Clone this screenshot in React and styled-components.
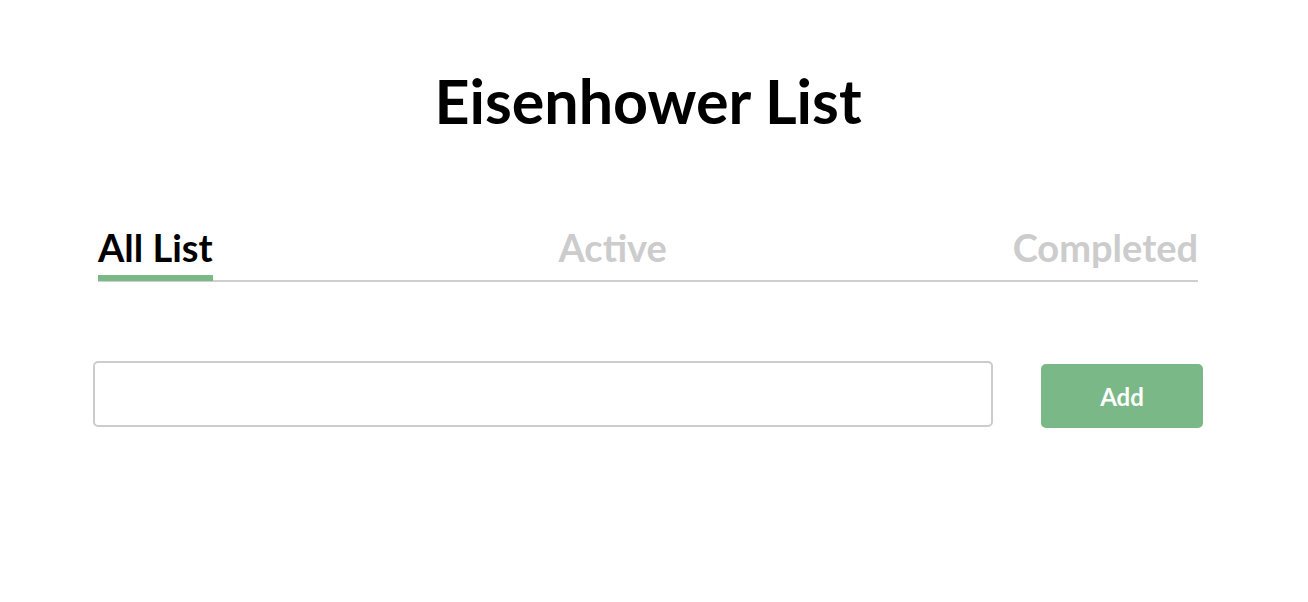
import React, { useState } from "react";
import styled, { createGlobalStyle } from "styled-components";

const GlobalStyle = createGlobalStyle`
  body {
    margin: 0;
    background: #fff;
    font-family: "Lato", "Inter", sans-serif;
  }
`;

const Page = styled.div`
  padding: 65px 105px 0 93px;
`;

const Title = styled.h1`
  margin: 0;
  text-align: center;
  font-size: 61px;
  font-weight: 700;
  color: #000;
  line-height: 72px;
`;

const Tabs = styled.div`
  display: flex;
  justify-content: space-between;
  margin: 88px 5px 0;
  border-bottom: 2px solid #cfcfcf;
`;

const Tab = styled.button`
  background: none;
  border: none;
  padding: 0 0 6px;
  font-family: inherit;
  font-size: 38px;
  font-weight: 700;
  line-height: 44px;
  color: ${(p) => (p.$active ? "#000" : "#cccccc")};
  border-bottom: 6px solid ${(p) => (p.$active ? "#7bb887" : "transparent")};
  margin-bottom: -1px;
  cursor: pointer;
`;

const Form = styled.form`
  display: flex;
  align-items: center;
  gap: 48px;
  margin-top: 78px;
`;

const Input = styled.input`
  width: 900px;
  height: 66px;
  box-sizing: border-box;
  border: 2px solid #cccccc;
  border-radius: 5px;
  padding: 0 16px;
  font-family: inherit;
  font-size: 22px;
  outline: none;
`;

const AddButton = styled.button`
  width: 162px;
  height: 64px;
  margin-top: 4px;
  border: none;
  border-radius: 5px;
  background: #7bb887;
  color: #fff;
  font-family: inherit;
  font-size: 24px;
  font-weight: 700;
  cursor: pointer;
`;

const tabs = ["All List", "Active", "Completed"];

const App = () => {
  const [active, setActive] = useState("All List");
  const [text, setText] = useState("");

  return (
    <Page>
      <GlobalStyle />
      <Title>Eisenhower List</Title>
      <Tabs>
        {tabs.map((t) => (
          <Tab key={t} $active={active === t} onClick={() => setActive(t)}>
            {t}
          </Tab>
        ))}
      </Tabs>
      <Form onSubmit={(e) => e.preventDefault()}>
        <Input value={text} onChange={(e) => setText(e.target.value)} />
        <AddButton type="submit">Add</AddButton>
      </Form>
    </Page>
  );
};

export default App;
